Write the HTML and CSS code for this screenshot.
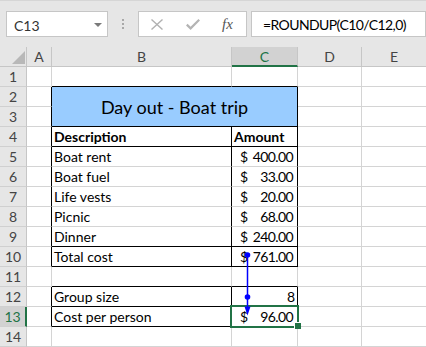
FILE: index.html
```html
<!DOCTYPE html>
<html lang="en">
<head>
    <meta charset="UTF-8">
    <title>Day out - Boat trip</title>
    <link rel="stylesheet" href="styles.css">
</head>
<body>

    <!-- Name box and formula bar -->
    <div class="formula-bar">
        <div class="name-box">
            <span>C13</span>
            <span class="drop-arrow"></span>
        </div>
        <div class="grip"><span></span><span></span><span></span></div>
        <div class="fx-buttons">
            <svg class="icon-cancel" width="12" height="11" viewBox="0 0 12 11">
                <path d="M0.5 0.5 L11.5 10.5 M11.5 0.5 L0.5 10.5" stroke="#b1b1b1" stroke-width="1.4" fill="none"/>
            </svg>
            <svg class="icon-enter" width="14" height="11" viewBox="0 0 14 11">
                <path d="M0.8 5.6 L4.6 9.4 L13.2 0.8" stroke="#b4b4b4" stroke-width="2.2" fill="none"/>
            </svg>
            <span class="fx">fx</span>
        </div>
        <div class="formula-input">=ROUNDUP(C10/C12,0)</div>
    </div>

    <!-- Worksheet -->
    <div class="sheet">
        <div class="cell corner"><span class="corner-mark"></span></div>
        <div class="cell col-head">A</div>
        <div class="cell col-head">B</div>
        <div class="cell col-head selected">C</div>
        <div class="cell col-head">D</div>
        <div class="cell col-head">E</div>

        <!-- row 1 -->
        <div class="cell row-head">1</div>
        <div class="cell"></div>
        <div class="cell edge-b"></div>
        <div class="cell edge-b"></div>
        <div class="cell"></div>
        <div class="cell"></div>

        <!-- rows 2-3 (merged title) -->
        <div class="cell row-head">2</div>
        <div class="cell edge-r"></div>
        <div class="cell title edge-r edge-b">Day out - Boat trip</div>
        <div class="cell"></div>
        <div class="cell"></div>
        <div class="cell row-head">3</div>
        <div class="cell edge-r"></div>
        <div class="cell"></div>
        <div class="cell"></div>

        <!-- row 4 -->
        <div class="cell row-head">4</div>
        <div class="cell edge-r"></div>
        <div class="cell bold edge-r edge-b">Description</div>
        <div class="cell bold edge-r edge-b">Amount</div>
        <div class="cell"></div>
        <div class="cell"></div>

        <!-- row 5 -->
        <div class="cell row-head">5</div>
        <div class="cell edge-r"></div>
        <div class="cell edge-r">Boat rent</div>
        <div class="cell money edge-r"><span>$</span><span>400.00</span></div>
        <div class="cell"></div>
        <div class="cell"></div>

        <!-- row 6 -->
        <div class="cell row-head">6</div>
        <div class="cell edge-r"></div>
        <div class="cell edge-r">Boat fuel</div>
        <div class="cell money edge-r"><span>$</span><span>33.00</span></div>
        <div class="cell"></div>
        <div class="cell"></div>

        <!-- row 7 -->
        <div class="cell row-head">7</div>
        <div class="cell edge-r"></div>
        <div class="cell edge-r">Life vests</div>
        <div class="cell money edge-r"><span>$</span><span>20.00</span></div>
        <div class="cell"></div>
        <div class="cell"></div>

        <!-- row 8 -->
        <div class="cell row-head">8</div>
        <div class="cell edge-r"></div>
        <div class="cell edge-r">Picnic</div>
        <div class="cell money edge-r"><span>$</span><span>68.00</span></div>
        <div class="cell"></div>
        <div class="cell"></div>

        <!-- row 9 -->
        <div class="cell row-head">9</div>
        <div class="cell edge-r"></div>
        <div class="cell edge-r edge-b">Dinner</div>
        <div class="cell money edge-r edge-b"><span>$</span><span>240.00</span></div>
        <div class="cell"></div>
        <div class="cell"></div>

        <!-- row 10 -->
        <div class="cell row-head">10</div>
        <div class="cell edge-r"></div>
        <div class="cell edge-r edge-b">Total cost</div>
        <div class="cell money edge-r edge-b"><span>$</span><span>761.00</span></div>
        <div class="cell"></div>
        <div class="cell"></div>

        <!-- row 11 -->
        <div class="cell row-head">11</div>
        <div class="cell"></div>
        <div class="cell edge-b"></div>
        <div class="cell edge-b"></div>
        <div class="cell"></div>
        <div class="cell"></div>

        <!-- row 12 -->
        <div class="cell row-head">12</div>
        <div class="cell edge-r"></div>
        <div class="cell edge-r edge-b">Group size</div>
        <div class="cell num edge-r edge-b">8</div>
        <div class="cell"></div>
        <div class="cell"></div>

        <!-- row 13 -->
        <div class="cell row-head selected">13</div>
        <div class="cell edge-r"></div>
        <div class="cell edge-r edge-b">Cost per person</div>
        <div class="cell money edge-r edge-b"><span>$</span><span>96.00</span></div>
        <div class="cell"></div>
        <div class="cell"></div>

        <!-- row 14 -->
        <div class="cell row-head">14</div>
        <div class="cell"></div>
        <div class="cell"></div>
        <div class="cell"></div>
        <div class="cell"></div>
        <div class="cell"></div>

        <!-- active cell C13 -->
        <div class="selection"></div>
        <div class="fill-handle"></div>

        <!-- trace precedents arrows -->
        <svg class="trace" width="426" height="300" viewBox="0 0 426 300">
            <line x1="247.5" y1="208" x2="247.5" y2="261" stroke="#0000ff" stroke-width="1.5"/>
            <circle cx="247.5" cy="208" r="2.8" fill="#0000ff"/>
            <circle cx="247.5" cy="250" r="2.8" fill="#0000ff"/>
            <polygon points="244.5,259.5 250.5,259.5 247.5,268.5" fill="#0000ff"/>
        </svg>
    </div>

</body>
</html>
```

FILE: styles.css
```css
/* Reset default margin and padding */
* {
    margin: 0;
    padding: 0;
    box-sizing: border-box;
}

body {
    width: 426px;
    height: 347px;
    overflow: hidden;
    background: #e6e6e6;
    font-family: Lato, "Liberation Sans", sans-serif;
    color: #000;
}

/* Formula bar */
.formula-bar {
    height: 47px;
    display: flex;
    align-items: flex-start;
    padding: 10px 0 0 6px;
    border-top: 1px solid #d6d6d6;
}

.name-box {
    width: 102px;
    height: 26px;
    background: #fff;
    border: 1px solid #c6c6c6;
    display: flex;
    align-items: center;
    justify-content: space-between;
    padding: 2px 5px 0 7px;
    font-size: 14px;
    color: #333;
}

.drop-arrow {
    width: 0;
    height: 0;
    border-left: 4px solid transparent;
    border-right: 4px solid transparent;
    border-top: 4px solid #7a7a7a;
    margin-top: -1px;
}

.grip {
    display: flex;
    flex-direction: column;
    gap: 2px;
    margin-left: 14px;
    padding-top: 8px;
}

.grip span {
    width: 2px;
    height: 2px;
    background: #a8a8a8;
}

.fx-buttons {
    width: 109px;
    height: 26px;
    margin-left: 14px;
    background: #fff;
    border: 1px solid #c6c6c6;
    display: flex;
    align-items: center;
    padding: 1px 0 0 12px;
}

.icon-enter {
    margin-left: 23px;
}

.fx {
    margin-left: 22px;
    font-family: "Liberation Serif", serif;
    font-style: italic;
    font-size: 15px;
    color: #555;
}

.formula-input {
    flex: 1;
    height: 26px;
    margin-left: 4px;
    background: #fff;
    border: 1px solid #c6c6c6;
    padding: 2px 0 0 11px;
    font-size: 14px;
    letter-spacing: -0.6px;
    line-height: 22px;
    white-space: nowrap;
}

/* Worksheet grid */
.sheet {
    position: relative;
    width: 427px;
    display: grid;
    grid-template-columns: 27px 25px 180px 66px 64px 65px;
    grid-auto-rows: 20px;
    background: #fff;
}

.cell {
    border-right: 1px solid #d4d4d4;
    border-bottom: 1px solid #d4d4d4;
    padding: 0 2px;
    font-size: 14px;
    line-height: 19px;
    white-space: nowrap;
    overflow: hidden;
}

.corner,
.col-head,
.row-head {
    background: #e6e6e6;
    border-color: #c6c6c6;
    color: #444;
    text-align: center;
}

.row-head {
    border-bottom-color: #d0d0d0;
}

.corner {
    display: flex;
    align-items: flex-end;
    justify-content: flex-end;
    padding: 0 1px 2px 0;
}

.corner-mark {
    width: 0;
    height: 0;
    border-left: 13px solid transparent;
    border-bottom: 13px solid #b8b8b8;
}

.col-head.selected {
    background: #d2d2d2;
    color: #217346;
    border-bottom: 2px solid #217346;
}

.row-head.selected {
    background: #d2d2d2;
    color: #217346;
    border-right: 2px solid #217346;
}

/* Black cell borders */
.edge-r {
    border-right-color: #000;
}

.edge-b {
    border-bottom-color: #000;
}

.title {
    grid-column: span 2;
    grid-row: span 2;
    background: #99ccff;
    display: flex;
    align-items: center;
    justify-content: center;
    font-size: 18px;
    padding-top: 2px;
}

.bold {
    font-weight: bold;
}

.money {
    display: flex;
    justify-content: space-between;
    padding: 0 4px 0 8px;
    letter-spacing: -0.6px;
}

.num {
    text-align: right;
}

/* Active cell */
.selection {
    position: absolute;
    left: 230px;
    top: 258px;
    width: 69px;
    height: 23px;
    border: 2px solid #217346;
}

.fill-handle {
    position: absolute;
    left: 294px;
    top: 275px;
    width: 7px;
    height: 7px;
    background: #217346;
    border-left: 1px solid #fff;
    border-top: 1px solid #fff;
}

.trace {
    position: absolute;
    left: 0;
    top: 0;
}
```
